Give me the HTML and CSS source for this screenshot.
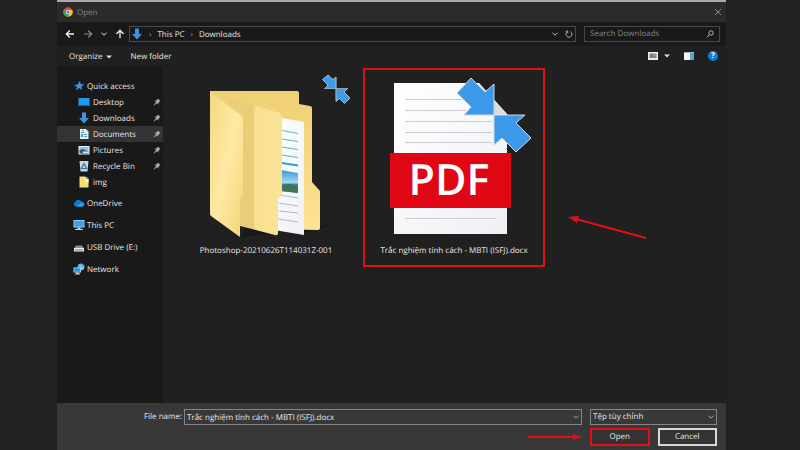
FILE: index.html
```html
<!DOCTYPE html>
<html lang="en">
<head>
<meta charset="utf-8">
<title>Open</title>
<link rel="stylesheet" href="styles.css">
</head>
<body>
<svg class="defs" aria-hidden="true">
  <defs>
    <linearGradient id="front" x1="0" x2="1" y1="0" y2="1"><stop offset="0" stop-color="#f3d97f"/><stop offset=".5" stop-color="#ffe9a3"/><stop offset="1" stop-color="#f3d57a"/></linearGradient>
    <linearGradient id="inner" x1="0" x2="1"><stop offset="0" stop-color="#edd079"/><stop offset=".48" stop-color="#e9cc75"/><stop offset=".52" stop-color="#f8df90"/><stop offset="1" stop-color="#fbe396"/></linearGradient>
    <linearGradient id="back" x1="0" x2="0" y1="0" y2="1"><stop offset="0" stop-color="#f0d074"/><stop offset="1" stop-color="#fde294"/></linearGradient>
    <linearGradient id="paper" x1="0" x2="1" y1="0" y2="1"><stop offset="0" stop-color="#fff"/><stop offset="1" stop-color="#eef0f4"/></linearGradient>
    <linearGradient id="photo" x1="0" x2="0" y1="0" y2="1"><stop offset="0" stop-color="#3b93d8"/><stop offset=".55" stop-color="#a9d7ef"/><stop offset=".65" stop-color="#36717a"/><stop offset="1" stop-color="#4b91a8"/></linearGradient>
    <symbol id="pin" viewBox="0 0 8 8"><path d="M5 .5 7.5 3 6.7 3.5 5.5 4.7 5.3 6.4 3.9 5.2 1 7.4.7 7.1 2.9 4.2 1.7 2.8 3.4 2.6 4.6 1.3z" fill="#a5a9ad"/></symbol>
    <symbol id="down" viewBox="0 0 12 12"><path d="M4 .5h4v5.5h3L6 11.5 1 6h3z" fill="#3d94e0"/></symbol>
    <symbol id="chev" viewBox="0 0 8 8"><path d="M1.500 2.700 4 5.200 6.500 2.700" fill="none" stroke="currentColor"/></symbol>
  </defs>
</svg>
<main class="dialog">
  <header class="titlebar">
    <svg class="chrome" viewBox="0 0 20 20" aria-hidden="true"><circle cx="10" cy="10" r="9.500" fill="#e84436"/><path d="M1.700 5.400A9.500 9.500 0 0 0 9 19.500L14 12 10 10 6 12z" fill="#35a853"/><path d="M9 19.500A9.500 9.500 0 0 0 18.400 6H10l4 6z" fill="#fbc116"/><circle cx="10" cy="10" r="4.500" fill="#fff"/><circle cx="10" cy="10" r="3.500" fill="#4285f4"/></svg>
    <h1 class="title">Open</h1>
    <button class="icon-button close" aria-label="Close"><svg viewBox="0 0 8 8"><path d="M1 1 7 7M7 1 1 7" fill="none" stroke="#a0a0a0" stroke-width=".8"/></svg></button>
  </header>
  <nav class="navbar" aria-label="Location">
    <div class="history">
      <button class="icon-button" aria-label="Back"><svg viewBox="0 0 10 10"><path d="M9 5H1.500M4.800 1.500 1.300 5 4.800 8.500" fill="none" stroke="#f4f4f4" stroke-width="1.300"/></svg></button>
      <button class="icon-button" aria-label="Forward"><svg viewBox="0 0 10 10"><path d="M1 5H8.500M5.200 1.500 8.700 5 5.200 8.500" fill="none" stroke="#8b8b8b" stroke-width="1.100"/></svg></button>
      <button class="icon-button small" aria-label="Recent locations"><svg><use href="#chev"/></svg></button>
      <button class="icon-button" aria-label="Up"><svg viewBox="0 0 10 10"><path d="M5 9.200V1.500M1.500 5 5 1.300 8.500 5" fill="none" stroke="#f4f4f4" stroke-width="1.300"/></svg></button>
    </div>
    <div class="address">
      <svg class="address-icon" aria-hidden="true"><use href="#down"/></svg>
      <span class="sep">›</span><a href="#pc">This PC</a><span class="sep">›</span><a href="#downloads">Downloads</a>
      <button class="icon-button small push" aria-label="Previous locations"><svg><use href="#chev"/></svg></button>
      <button class="icon-button small" aria-label="Refresh"><svg viewBox="0 0 8 8"><path d="M5.500 1.600A3 3 0 1 1 2.300 1.700M.6 1.200H2.700V3.300" fill="none" stroke="#bbb" stroke-width=".9"/></svg></button>
    </div>
    <label class="search">
      <input type="search" placeholder="Search Downloads" aria-label="Search Downloads">
      <svg viewBox="0 0 8 8" aria-hidden="true"><circle cx="5" cy="3" r="2.200" fill="none" stroke="#bbb" stroke-width=".9"/><path d="M3.500 4.600.8 7.300" stroke="#bbb"/></svg>
    </label>
  </nav>
  <div class="toolbar">
    <button class="text-button">Organize <svg class="caret" viewBox="0 0 6 4" aria-hidden="true"><path d="M0 .5h6L3 3.500z" fill="#ddd"/></svg></button>
    <button class="text-button">New folder</button>
    <div class="views">
      <button class="icon-button view" aria-label="View"><svg viewBox="0 0 10 8"><path d="M0 0h10v8H0z" fill="#eee"/><path d="M1.500 1.500h7v4.500h-7z" fill="#7b8588"/><path d="M2 5 4 3 6 5z" fill="#5b9a54"/><path d="M5 2h3v2H5z" fill="#a6a15a"/></svg></button>
      <button class="icon-button more" aria-label="More view options"><svg class="caret" viewBox="0 0 6 4"><path d="M0 .5h6L3 3.500z" fill="#ddd"/></svg></button>
      <button class="icon-button view" aria-label="Preview pane"><svg viewBox="0 0 10 8"><path d="M0 0h10v8H0z" fill="#f4f4f4"/><path d="M6 1h4v7H6z" fill="#55a5d8"/><path d="M0 0h10v1H0z" fill="#9fb6c8"/></svg></button>
      <button class="help" aria-label="Help">?</button>
    </div>
  </div>
  <div class="body">
    <aside class="sidebar">
      <ul class="group">
        <li class="row root"><svg viewBox="0 0 12 12" aria-hidden="true"><path d="M6.800.8 7.800 4.200 11.500 4.500 8.400 6.500 9.200 10.300 6.200 8 3 10.500 3.900 6.800.8 5 4.700 4.500z" fill="#3097e8"/></svg><a href="#quick">Quick access</a></li>
        <li class="row"><svg viewBox="0 0 12 12" aria-hidden="true"><path d="M.5 2h11v8H.5z" fill="#1e9bf0"/><path d="M.5 9h11v1H.5z" fill="#0b6cb4"/></svg><a href="#desktop">Desktop</a><svg class="pin"><use href="#pin"/></svg></li>
        <li class="row"><svg aria-hidden="true"><use href="#down"/></svg><a href="#downloads">Downloads</a><svg class="pin"><use href="#pin"/></svg></li>
        <li class="row selected"><svg viewBox="0 0 12 12" aria-hidden="true"><path d="M2 1h6l2.500 2.500V11H2z" fill="#e6eef1"/><path d="M3 4h3v1H3zM3 6h2v3H3zM6 6h3v1H6zM6 8h3v1H6zM4 2h2v1H4z" fill="#4fa3bd"/></svg><a href="#documents">Documents</a><svg class="pin"><use href="#pin"/></svg></li>
        <li class="row"><svg viewBox="0 0 12 12" aria-hidden="true"><path d="M.5 2h11v8.500H.5z" fill="#f1f4f6"/><path d="M1.500 3h9v6.500h-9z" fill="#8cc7e8"/><path d="M1.500 6 5 5l5.500 2.500v2h-9z" fill="#315d76"/><path d="M5 7.500h5.500V9H5z" fill="#d8edf5"/></svg><a href="#pictures">Pictures</a><svg class="pin"><use href="#pin"/></svg></li>
        <li class="row"><svg viewBox="0 0 12 12" aria-hidden="true"><path d="M1.500 1h9L9.500 11.500h-7z" fill="#c6d5df"/><path d="M6 3.500 8.500 8.500h-5z" fill="none" stroke="#35739f" stroke-width="1.200"/></svg><a href="#bin">Recycle Bin</a><svg class="pin"><use href="#pin"/></svg></li>
        <li class="row"><svg viewBox="0 0 12 12" aria-hidden="true"><path d="M1.500.5H7v2h3.500v9h-9z" fill="#f7dc78"/><path d="M7 .5 10.500 3v4L7 5z" fill="#fff3c5"/><path d="M8 1h2v2H8z" fill="#5c8d83"/></svg><a href="#img">img</a></li>
      </ul>
      <ul class="group places">
        <li class="row root"><svg viewBox="0 0 12 12" aria-hidden="true"><path d="M2.500 9.500A2.500 2.500 0 0 1 2 5 3.600 3.600 0 0 1 8.500 4.500 2.500 2.500 0 0 1 9.500 9.500z" fill="#087bd0"/><path d="M3 9.500 8.500 5.500a2.500 2.500 0 0 1 1 4z" fill="#27a3ed"/></svg><a href="#onedrive">OneDrive</a></li>
        <li class="row root"><svg viewBox="0 0 12 12" aria-hidden="true"><path d="M.5 1h11v7.500H.5z" fill="#b7dcef"/><path d="M1.200 1.700h9.600v6H1.200z" fill="#35a3e7"/><path d="M4.500 8.500h3v1.500H10v1H2v-1h2.500z" fill="#c5d4dd"/></svg><a href="#pc">This PC</a></li>
        <li class="row root"><svg viewBox="0 0 12 12" aria-hidden="true"><path d="M3 4.500h6l2 3H1z" fill="#8e8e8e"/><path d="M1 7h10v3.500H1z" fill="#ededed"/><path d="M2 8.500h8v.8H2z" fill="#555"/></svg><a href="#usb">USB Drive (E:)</a></li>
        <li class="row root"><svg viewBox="0 0 12 12" aria-hidden="true"><circle cx="8" cy="4" r="3.500" fill="#4ba8df"/><path d="M6 1.500 8.500 3 8 6l3-1.500" fill="none" stroke="#bfe3f5" stroke-width=".8"/><path d="M.5 4.500h7.500v5H.5z" fill="#c4dfed"/><path d="M1.200 5.200h6v3.600h-6z" fill="#2598db"/><path d="M3 9.500h3v1h1v1H2v-1h1z" fill="#bcd0dc"/></svg><a href="#network">Network</a></li>
      </ul>
    </aside>
    <section class="files" aria-label="Files">
      <figure class="file">
        <svg viewBox="177 70 178 168" aria-hidden="true">
          <path d="M290 228 334 224 300 234zM240 237l8-10 20 7z" fill="#181818"/>
          <path d="M210 91h87q2 0 2 2v11l11 2q2 0 2 2v74l8 9v37q0 2-2 2l-48-1-60-100z" fill="url(#back)"/>
          <path d="M276 117 304 122v113l-30-5z" fill="url(#paper)"/>
          <path d="M282 130.500 298 133.500M282 139 298 141.500M282 147 298 149.500M282 155 298 157.500" stroke="#6dafb4" fill="none"/>
          <path d="M282 163 298 165.500" stroke="#2d9fd1" stroke-width="2"/>
          <path d="M281 170 298 173v20l-17-2z" fill="url(#photo)"/><path d="M281 186q8-5 17 1v6l-17-2z" fill="#3e755b"/>
          <path d="M280 195 298 198M279 203 298 206M279 211 298 213M278 219 298 222" stroke="#b5b9c4" fill="none"/>
          <path d="M226 97 280 113q2 1 2 3v78l-4 5v34q0 3-3 2l-35-9-14-10z" fill="url(#inner)"/>
          <path d="M210 92 241 115q2 2 2 5v74l-3 5v38l-29-21q-1-1-1-2z" fill="url(#front)"/>
          <g fill="#3d9cec" stroke="#c5d2dc" stroke-width=".8"><path d="M328 75 333 79.500 336 77V88.500H325L328 85 322.500 79.500z"/><path d="M336 88.500h12l-4 3.500 6 6-5.500 5.500-5-5-3.500 3z"/></g>
          <path d="M336 77v22M324 88.500h24" stroke="#899fac" stroke-width=".8"/>
        </svg>
        <figcaption>Photoshop-20210626T114031Z-001</figcaption>
      </figure>
      <figure class="file marked">
        <svg viewBox="365 70 178 168" role="img" aria-label="PDF document">
          <path d="M394 83h85l28 31v120H394z" fill="url(#paper)"/>
          <path d="M479 83v31h28z" fill="#d9dde0"/>
          <path d="M405 99.500h57M405 110.500h61M405 121.500h87M405 132.500h87M405 142.500h87M405 218.500h91" stroke="#cbcdd1"/>
          <path d="M390 153h121v55H390z" fill="#df0714"/>
          <text class="pdf" x="449" y="195" text-anchor="middle">PDF</text>
          <g fill="#3d9aea" stroke="#ccd7df"><path d="M471 78 485 92 494 84V115H464L471 107 457 93z"/><path d="M494 115h31l-9 8 15 15-15 14-14-14-8 7z"/></g>
        </svg>
        <figcaption>Trắc nghiệm tính cách - MBTI (ISFJ).docx</figcaption>
      </figure>
      <svg class="pointer pointer-file" viewBox="0 0 80 26" aria-hidden="true"><path d="M8 4 78 23" stroke="#e30f18" stroke-width="2"/><path d="M0 2 11 1 9 8z" fill="#e30f18"/></svg>
    </section>
  </div>
  <form class="footer">
    <label class="name-label" for="filename">File name:</label>
    <div class="combo">
      <input id="filename" type="text" value="Trắc nghiệm tính cách - MBTI (ISFJ).docx">
      <svg class="combo-arrow" aria-hidden="true"><use href="#chev"/></svg>
    </div>
    <div class="combo">
      <select aria-label="File type"><option>Tệp tùy chỉnh</option></select>
      <svg class="combo-arrow" aria-hidden="true"><use href="#chev"/></svg>
    </div>
    <div class="actions">
      <button type="button" class="action open">Open</button>
      <button type="button" class="action">Cancel</button>
      <svg class="pointer pointer-open" viewBox="0 0 54 8" aria-hidden="true"><path d="M0 4h47" stroke="#e30f18" stroke-width="2"/><path d="M54 4 45 1v6z" fill="#e30f18"/></svg>
    </div>
  </form>
</main>
</body>
</html>
```
FILE: styles.css
```css
* { box-sizing: border-box; }

body {
  margin: 0;
  background: #222;
  color: #e8e8e8;
  font: 8px/16px "Open Sans", "Noto Sans", sans-serif;
  text-rendering: geometricPrecision;
}

button, input, select { font: inherit; color: inherit; margin: 0; text-rendering: inherit; }
a { color: inherit; text-decoration: none; }
ul, figure, h1 { margin: 0; padding: 0; list-style: none; }
svg { display: block; flex: none; }
.defs { position: absolute; width: 0; height: 0; }

.dialog {
  display: flex;
  flex-direction: column;
  min-height: 100vh;
  margin: 0 74px 0 57px;
}

/* Title bar */
.titlebar {
  display: flex;
  align-items: center;
  gap: 4px;
  height: 22px;
  padding: 0 3px 0 6px;
  background: #2b2b2b;
  border-top: 2px solid #aaa;
}
.chrome { width: 10px; height: 10px; }
.title { flex: 1; font-size: 8px; font-weight: 400; color: #858585; }

.icon-button {
  display: grid;
  place-items: center;
  width: 10px;
  height: 12px;
  padding: 0;
  border: 0;
  background: none;
  color: #bbb;
}
.icon-button svg { width: 10px; height: 10px; }
.icon-button.small, .icon-button.small svg { width: 8px; height: 8px; }
.icon-button.close svg { width: 8px; height: 8px; }

/* Navigation */
.navbar {
  display: flex;
  align-items: center;
  gap: 8px;
  height: 24px;
  padding: 0 6px 0 8px;
  background: #191919;
}
.history { display: flex; align-items: center; gap: 8px; margin-right: -4px; }
.history .small { margin: 0 -1px; color: #eee; }
.address, .search {
  display: flex;
  align-items: center;
  height: 16px;
  border: 1px solid #484848;
}
.address { flex: 1; gap: 6px; padding: 0 2px 0 1px; }
.address-icon { width: 12px; height: 12px; }
.sep { color: #999; }
.push { margin-left: auto; }
.search { width: 136px; padding: 0 5px; }
.search input {
  flex: 1;
  min-width: 0;
  height: 14px;
  padding: 0;
  border: 0;
  background: none;
  outline: 0;
}
.search input::placeholder { color: #888; opacity: 1; }
.search svg { width: 8px; height: 8px; }

/* Toolbar */
.toolbar {
  display: flex;
  align-items: center;
  gap: 18px;
  height: 20px;
  padding: 0 8px 0 12px;
  background: #202020;
}
.text-button {
  display: flex;
  align-items: center;
  gap: 4px;
  padding: 0;
  border: 0;
  background: none;
}
.caret, .icon-button .caret { width: 6px; height: 4px; }
.views { display: flex; align-items: center; gap: 12px; margin-left: auto; }
.icon-button.view svg { width: 10px; height: 8px; }
.icon-button.more { width: 6px; margin: 0 2px 0 -6px; }
.help {
  width: 10px;
  height: 10px;
  margin-left: 2px;
  padding: 0;
  border: 0;
  border-radius: 50%;
  background: #1180d2;
  color: #fff;
  font-weight: 700;
  line-height: 10px;
}

/* Text sits just below the middle of its bar */
.title, .sep, .address a, .row a, .text-button { padding-top: 2px; }

/* Folder tree and files */
.body { display: flex; flex: 1; }
.sidebar { width: 106px; padding-top: 12px; background: #191919; }
.row {
  display: flex;
  align-items: center;
  gap: 3px;
  height: 16px;
  padding: 0 2px 0 21px;
  white-space: nowrap;
}
.row svg { width: 12px; height: 12px; }
.row .pin { width: 8px; height: 8px; margin-left: auto; }
.row.root { gap: 2px; padding-left: 16px; }
.row.selected { background: #333; }
.places { display: grid; gap: 6px; margin-top: 5px; }

.files {
  position: relative;
  display: flex;
  flex: 1;
  align-items: flex-start;
  gap: 6px;
  padding: 2px 12px;
  background: #202020;
}
.file {
  width: 182px;
  padding-bottom: 4px;
  border: 2px solid transparent;
  text-align: center;
  white-space: nowrap;
}
.file.marked { border-color: #e0101a; }
.file svg { width: 100%; height: auto; }
.file figcaption { line-height: 20px; padding-top: 3px; }
.pdf { fill: #fff; font-size: 43px; font-weight: 600; }

/* Annotation arrows lie over the window */
.pointer { position: absolute; }
.pointer-file { left: 405px; top: 149px; width: 80px; height: 26px; }
.pointer-open { right: 100%; margin-right: 8px; top: 5px; width: 54px; height: 8px; }

/* Footer */
.footer {
  display: grid;
  grid-template-columns: 125px 1fr 127px;
  column-gap: 8px;
  row-gap: 3px;
  padding: 6px 9px 4px 0;
  background: #383838;
}
.name-label { text-align: right; }
.combo { position: relative; }
.combo:first-of-type { margin-left: -6px; }
.combo input, .combo select {
  display: block;
  width: 100%;
  height: 16px;
  padding: 0 14px 0 2px;
  border: 1px solid #858585;
  border-radius: 0;
  background: #383838;
  outline: 0;
  line-height: 14px;
  appearance: none;
}
.combo-arrow {
  position: absolute;
  right: 2px;
  top: 4px;
  width: 8px;
  height: 8px;
  color: #aaa;
  pointer-events: none;
}
.actions {
  position: relative;
  grid-column: 3;
  display: grid;
  grid-template-columns: 1fr 1fr;
  gap: 8px;
}
.action {
  height: 18px;
  padding: 0;
  border: 2px solid #d8d8d8;
  background: #333;
  line-height: 14px;
}
.action.open { border-color: #e30f18; }
```
